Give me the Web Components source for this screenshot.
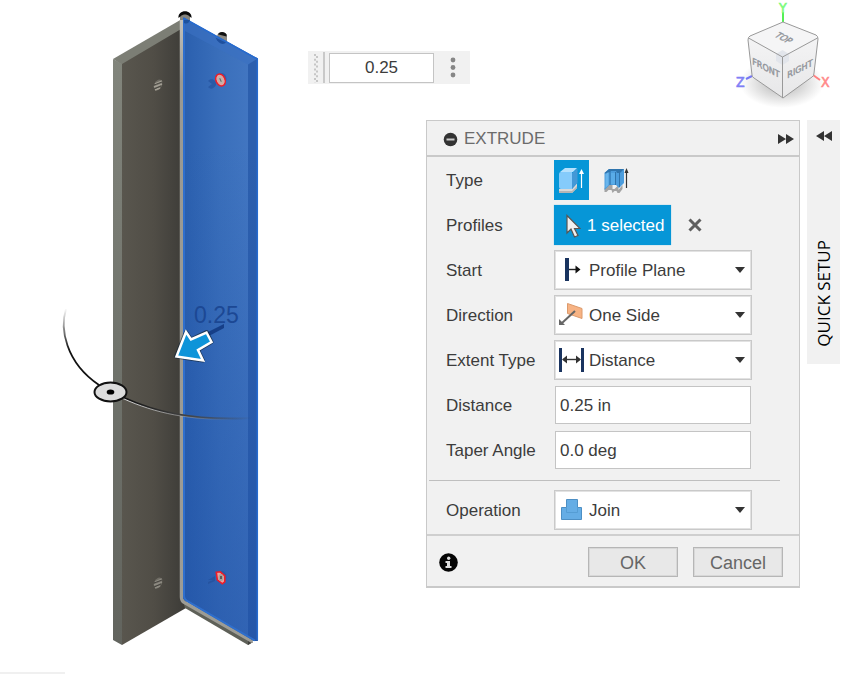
<!DOCTYPE html>
<html lang="en">
<head>
<meta charset="utf-8">
<title>Extrude</title>
<style>
body { margin: 0; background: #fff; color: #3c3c3c; font: 17px/20px "Liberation Sans", Arial, sans-serif; }
</style>
</head>
<body>
<cad-workspace>
  <model-view slot="model"></model-view>
  <value-toolbar slot="top" value="0.25"></value-toolbar>
  <view-cube slot="top"></view-cube>
  <command-panel slot="panels" heading="EXTRUDE">
    <type-picker></type-picker>
    <profile-picker></profile-picker>
    <select-field label="Start" options="Profile Plane|Offset Plane|Object">
      <svg slot="icon" width="30" height="32" viewBox="0 0 30 32"><path d="M8 4v23" stroke="#19335f" stroke-width="4"/><path d="M10 15.500h9" stroke="#222" stroke-width="1.4"/><path d="M16.500 11.500l5 4-5 4z" fill="#111"/></svg>
    </select-field>
    <select-field label="Direction" options="One Side|Two Sides|Symmetric">
      <svg slot="icon" width="30" height="32" viewBox="0 0 30 32"><path d="M8.500 4.500l14.500 5v10l-14.500-5z" fill="#f7b384" stroke="#dc9a6c"/><path d="M16 12L3 24" stroke="#666" stroke-width="2"/><path d="M0 20l6 6H0z" fill="#666"/></svg>
    </select-field>
    <select-field label="Extent Type" options="Distance|To Object|All">
      <svg slot="icon" width="30" height="32" viewBox="0 0 30 32"><path d="M1.500 4v24M23.500 4v24" stroke="#19335f" stroke-width="3"/><path d="M4 15.500h17" stroke="#333" stroke-width="1.400"/><path d="M3 15.500l5-4v8zM22 15.500l-5-4v8z" fill="#333"/></svg>
    </select-field>
    <text-field label="Distance" value="0.25 in"></text-field>
    <text-field label="Taper Angle" value="0.0 deg"></text-field>
    <panel-rule></panel-rule>
    <select-field label="Operation" options="Join|Cut|Intersect|New Body">
      <svg slot="icon" width="30" height="32" viewBox="0 0 30 32"><path d="M7.500 5.500h11v8h4v12h-20v-12h5z" fill="#65ade5" stroke="#4d8fc4"/><path d="M7.500 13.500v5h11v-5" fill="none" stroke="#559dd4"/></svg>
    </select-field>
  </command-panel>
  <side-tab slot="panels">QUICK SETUP</side-tab>
</cad-workspace>

<script>
const define = (name, html, setup) => customElements.define(name, class extends HTMLElement {
  constructor() {
    super();
    this.attachShadow({ mode: "open" }).innerHTML = html;
  }
  connectedCallback() { if (setup) setup(this, this.shadowRoot); }
});

define("cad-workspace", `
<style>
  :host { display: grid; grid-template-columns: auto 1fr; min-height: 100vh; }
  .side { display: flex; flex-direction: column; }
  .top { display: flex; justify-content: space-between; align-items: flex-start; height: 120px; }
  .panels { display: flex; justify-content: flex-end; align-items: flex-start; gap: 7px; padding-right: 4px; }
</style>
<slot name="model"></slot>
<div class="side">
  <div class="top"><slot name="top"></slot></div>
  <div class="panels"><slot name="panels"></slot></div>
</div>`);

define("model-view", `
<style>:host { display: block; width: 308px; } svg { display: block; }</style>
<svg width="308" height="674" viewBox="0 0 308 674" font-family="Liberation Sans, Arial, sans-serif">
  <defs>
    <linearGradient id="inner"><stop offset="0" stop-color="#59564e"/><stop offset=".5" stop-color="#504d46"/><stop offset="1" stop-color="#3c3b37"/></linearGradient>
    <linearGradient id="edge" x2="0" y2="1"><stop offset="0" stop-color="#82857c"/><stop offset=".5" stop-color="#70736c"/><stop offset="1" stop-color="#62645e"/></linearGradient>
    <linearGradient id="blue"><stop offset="0" stop-color="#2a5fae"/><stop offset=".5" stop-color="#3a6fbb"/><stop offset="1" stop-color="#4478c3"/></linearGradient>
    <linearGradient id="fall" x2="0" y2="1"><stop offset="0" stop-color="#1c4da4" stop-opacity="0"/><stop offset=".2" stop-color="#1c4da4" stop-opacity="0"/><stop offset="1" stop-color="#1c4da4" stop-opacity=".45"/></linearGradient>
    <linearGradient id="silver" x2="0" y2="1"><stop offset="0" stop-color="#c2c1bb"/><stop offset=".1" stop-color="#9a9992"/><stop offset="1" stop-color="#9d9c95"/></linearGradient>
    <linearGradient id="arcA" gradientUnits="userSpaceOnUse" x1="0" y1="308" x2="0" y2="350"><stop offset="0" stop-color="#111" stop-opacity="0"/><stop offset="1" stop-color="#111"/></linearGradient>
    <linearGradient id="arcB" gradientUnits="userSpaceOnUse" x1="123" y1="0" x2="252" y2="0"><stop offset="0" stop-color="#111"/><stop offset=".5" stop-color="#444"/><stop offset="1" stop-color="#444" stop-opacity="0"/></linearGradient>
    <linearGradient id="arcC" gradientUnits="userSpaceOnUse" x1="123" y1="0" x2="235" y2="0"><stop offset="0" stop-color="#ddd"/><stop offset="1" stop-color="#aaa" stop-opacity="0"/></linearGradient>
  </defs>
  <path d="M180 14h10v8h-10z" fill="#85837c"/><path d="M178.500 18c-1-9 14-9 13 0l-2.500-2c-2-2-6-2-8 0z" fill="#0a0a0a"/>
  <path d="M217 36c1-5 8-5 10-1v7l-10-5z" fill="#8b8983"/><path d="M218 34.500c1-3.500 7-3.500 8.500 0v2l-8-2z" fill="#111"/>
  <path d="M113 59l69-40v12l-60 34z" fill="#7c7e75"/>
  <path d="M113 59l9 5v581l-9-5z" fill="url(#edge)"/>
  <path d="M122 64l60-35.500 4 579.500-64 37z" fill="url(#inner)"/>
  <path d="M183 601l70 41-5 3-63-37z" fill="#5e6058"/>
  <path d="M248 645v-5l5 2z" fill="#42423e"/>
  <path d="M181.500 20v577q0 4 3 5.500l68 39" fill="none" stroke="url(#silver)" stroke-width="3.500"/>
  <path d="M183 17.500L258 58.500V641h-4L185.500 601q-2.500-1.500-2.500-4z" fill="url(#blue)"/>
  <path d="M183.500 17.500L258 58.500l-10 6-64-34z" fill="#3a70c1" fill-opacity=".65"/>
  <path d="M248 64.500l9-5.500V641h-3l-6-4z" fill="#2c5fae"/>
  <path d="M183 17.500L258 58.500V641h-4L185.500 601q-2.500-1.500-2.500-4z" fill="url(#fall)"/>
  <path d="M184 19v577q0 3 2.500 4.500L255 640.500" fill="none" stroke="#2f6fcd" stroke-width="2"/>
  <path d="M183.500 18L257.300 59v581" fill="none" stroke="#276bce" stroke-width="1.500"/>
  <path d="M215.500 37.500l10.500 5c-3 3-8 1-10.500-5z" fill="#1e509f"/>
  <path d="M184 20h6q-2 5-6 3z" fill="#1d529f"/>
  <g transform="translate(158 85)"><ellipse rx="3.800" ry="5.800" transform="rotate(25)" fill="#6f6c64"/><path d="M-3-1l7-3M-4 2L4-1M-3 5l5-2" stroke="#a39f94" stroke-width="1.500"/><path d="M-4-0l8-3M-4 4l7-3" stroke="#4a4842"/></g>
  <g transform="translate(158 583)"><ellipse rx="3.800" ry="5.800" transform="rotate(25)" fill="#6f6c64"/><path d="M-3-1l7-3M-4 2L4-1M-3 5l5-2" stroke="#8d8a81" stroke-width="1.500"/><path d="M-4-0l8-3M-4 4l7-3" stroke="#45433e"/></g>
  <path d="M208 81c3-4 9-1 8 4-3 5-6 4-8 2l4-3z" fill="#2a5aa6"/>
  <path d="M208 580l7-4v5l-7 3v-2l5-2z" fill="#2654a0"/>
  <ellipse cx="222" cy="79" rx="4.500" ry="6" fill="#2f5fab"/>
  <ellipse cx="222" cy="577" rx="4.500" ry="6" fill="#2b59a4"/>
  <g transform="translate(220.500 80) rotate(-24)"><ellipse rx="4.500" ry="6.200" fill="#c0b4ad" stroke="#f01b26" stroke-width="1.500"/><ellipse rx="3" ry="4.700" fill="none" stroke="#f29a98"/><path d="M0-2v4" stroke="#666"/></g>
  <path d="M216.300 572.300l4-.5 4.500 4v6l-2.500 2-5-4z" fill="#eaa3a0" stroke="#f01b26" stroke-width="1.600"/><ellipse cx="221" cy="577.500" rx="2.500" ry="3.500" fill="#aaa19d"/><path d="M221 576v3" stroke="#444" stroke-width="1.500"/>
  <text x="194" y="323" font-size="23" fill="#1c4894">0.25</text>
  <path d="M206 333l18-9v4l-17 9z" fill="#163f88"/>
  <path d="M66 309C60 328 65 362 99 385" fill="none" stroke="url(#arcA)" stroke-width="1.800"/>
  <path d="M123 397.500C155 412 190 421 252 418" fill="none" stroke="url(#arcB)" stroke-width="2"/>
  <path d="M123 398.500C155 413 190 421 240 419" fill="none" stroke="url(#arcC)"/>
  <ellipse cx="110.500" cy="392" rx="16" ry="9.500" fill="#dcdcdc" stroke="#111" stroke-width="2"/>
  <ellipse cx="110.500" cy="392" rx="3.800" ry="2.600" fill="#000"/>
  <path d="M176 356.500L186 332l5 7.500 15.500-7.500 5 10-13.500 8 5 10.500z" fill="#0d94d9" stroke="#172a3a" stroke-opacity=".7" stroke-width="4" stroke-linejoin="round"/>
  <path d="M176.500 356.500L186 332l5 7.500 15.500-7 5 9.500-13.500 8 5 10.500z" fill="#0d94d9" stroke="#fff" stroke-width="2.500"/>
  <path d="M0 672h65v2H0z" fill="#f0f0f0"/>
</svg>`);

define("value-toolbar", `
<style>
  :host { display: flex; align-items: center; box-sizing: border-box; width: 162px; height: 33px; margin-top: 51px; background: #f1f1f1; }
  svg { display: block; flex: none; }
  .bar { flex: none; width: 2px; height: 31px; margin: 0 4px 0 5px; background: #c9c9c9; }
  input { box-sizing: border-box; flex: 1; min-width: 0; height: 30px; padding: 0; border: 1px solid #c4c4c4; background: #fff; color: inherit; font: inherit; text-align: center; outline: 0; }
  button { display: grid; place-items: center; flex: none; width: 36px; height: 33px; padding: 0 0 0 2px; border: 0; background: none; }
</style>
<svg width="10" height="31" viewBox="0 0 10 31"><path d="M7 2v29" stroke="#c6c6c6" stroke-width="2" stroke-dasharray="2 2.800"/><path d="M9 4v27" stroke="#c6c6c6" stroke-width="2" stroke-dasharray="2 2.800"/></svg>
<span class="bar"></span>
<input aria-label="Distance">
<button aria-label="More options"><svg width="6" height="21" viewBox="0 0 6 21" fill="#868686"><circle cx="3" cy="3" r="2.400"/><circle cx="3" cy="10.500" r="2.400"/><circle cx="3" cy="18" r="2.400"/></svg></button>`,
(el, root) => { root.querySelector("input").value = el.getAttribute("value"); });

define("view-cube", `
<style>:host { display: block; margin-left: auto; } svg { display: block; }</style>
<svg width="124" height="112" viewBox="0 0 124 112" font-family="Liberation Sans, Arial, sans-serif">
  <defs><radialGradient id="sh"><stop offset="0" stop-color="#888" stop-opacity=".7"/><stop offset="1" stop-color="#999" stop-opacity="0"/></radialGradient>
  <linearGradient id="f" x2="0" y2="1"><stop offset="0" stop-color="#f7f7f8"/><stop offset="1" stop-color="#e7e7e8"/></linearGradient></defs>
  <ellipse cx="62" cy="83" rx="42" ry="25" fill="url(#sh)"/>
  <path d="M63 12v10" stroke="#55ef55" stroke-width="2"/>
  <path d="M32 76l-6 3" stroke="#7777f4" stroke-width="2"/><path d="M93 75l7 5" stroke="#ff8080" stroke-width="2"/>
  <g font-family="Liberation Sans Narrow, DejaVu Sans Condensed, sans-serif" font-size="14" stroke-width=".600">
    <text x="59" y="13" fill="#7dfa7d" stroke="#7dfa7d">Y</text>
    <text x="16" y="87" fill="#7f7ff5" stroke="#7f7ff5">Z</text>
    <text x="101" y="87" fill="#ff8a8a" stroke="#ff8a8a">X</text>
  </g>
  <path d="M63 22l33 13q2 1 2 4l-4 34q0 3-2 4L63 98 34 78q-2-1-2-3l-4-35q0-3 2-4z" fill="url(#f)"/>
  <path d="M63 22L97 37 62.500 57 28 37z" fill="#f5f5f6"/>
  <path d="M56 54l6.500-4 6.500 4v7l-6.500 4-6.500-4z" fill="#e2e5eb"/>
  <path d="M28.500 38l34 19L97.500 38M62.500 57v41" fill="none" stroke="#999" stroke-width="1"/>
  <path d="M63 22l33 13q2 1 2 4l-4 34q0 3-2 4L63 98 34 78q-2-1-2-3l-4-35q0-3 2-4z" fill="none" stroke="#999"/>
  <g fill="#92959b" stroke="#92959b" stroke-width=".400" text-anchor="middle" font-family="Liberation Sans Narrow, DejaVu Sans Condensed, sans-serif">
    <text transform="translate(46 71) skewY(27)" font-size="9">FRONT</text>
    <text transform="translate(80 72) skewY(-27)" font-size="9">RIGHT</text>
    <text transform="translate(61 40) rotate(28) skewX(-26)" font-size="9">TOP</text>
  </g>
</svg>`);

define("command-panel", `
<style>
  :host { display: block; box-sizing: border-box; width: 374px; border: 1px solid #c9c9c9; border-bottom-width: 2px; background: #f1f1f1; }
  header { display: flex; align-items: center; box-sizing: border-box; height: 36px; padding: 2px 5px 0 16px; border-bottom: 2px solid #c9c9c9; color: #6b6b6b; }
  h1 { flex: 1; margin: 0 0 0 6px; font: inherit; }
  button { font: inherit; color: inherit; }
  .bare { display: grid; padding: 0; border: 0; background: none; }
  svg { display: block; }
  .rows { display: grid; gap: 5px; padding: 3px 19px 4px 2px; }
  footer { display: flex; align-items: center; gap: 15px; box-sizing: border-box; height: 52px; padding: 2px 16px 0 12px; border-top: 2px solid #cfcfcf; }
  footer .bare { margin-right: auto; }
  .act { width: 90px; height: 30px; padding: 2px 0 0; border: 1px solid #b6b6b6; outline: 1px solid #d8d8d8; outline-offset: -2px; background: #e8e8e8; color: #666; font-size: 18px; line-height: 22px; }
</style>
<header>
  <button class="bare" aria-label="Collapse"><svg width="15" height="15" viewBox="0 0 15 15"><circle cx="7.500" cy="7.500" r="6.800" fill="#333"/><path d="M3.500 7.500h8" stroke="#ccc" stroke-width="2"/></svg></button>
  <h1></h1>
  <button class="bare" aria-label="Expand"><svg width="16" height="10" viewBox="0 0 16 10" fill="#333"><path d="M0 0l8 5-8 5zM8 0l8 5-8 5z"/></svg></button>
</header>
<div class="rows"><slot></slot></div>
<footer>
  <button class="bare" aria-label="Information"><svg width="19" height="19" viewBox="0 0 19 19"><circle cx="9.500" cy="9.500" r="9.300" fill="#050505"/><circle cx="9.700" cy="5.200" r="1.700" fill="#ddd"/><path d="M6.500 8h4.500v5h1.500v2h-6v-2H8v-3H6.500z" fill="#ddd"/></svg></button>
  <button class="act">OK</button>
  <button class="act">Cancel</button>
</footer>`,
(el, root) => { root.querySelector("h1").textContent = el.getAttribute("heading"); });

const rowStyle = `
  :host { display: grid; grid-template-columns: 108px 198px; align-items: center; height: 40px; padding-left: 17px; }
  label, .label { padding-top: 2px; color: #3c3c3c; }
  svg { display: block; }`;

define("type-picker", `
<style>${rowStyle}
  .set { display: flex; gap: 10px; }
  button { display: grid; place-items: center; width: 35px; height: 40px; padding: 0; border: 0; background: none; }
  button[aria-pressed=true] { background: #0696d7; }
</style>
<span class="label">Type</span>
<div class="set" role="group" aria-label="Type">
  <button aria-pressed="true" aria-label="Extrude"><svg width="27" height="28" viewBox="0 0 27 28">
    <path d="M1 23h13l5-6v5l-5 5H1z" fill="#d9d9d9"/><path d="M1 25h13l5-5v2l-5 5H1z" fill="#b5b5b5"/>
    <path d="M1 8q0-2 2-2h11v17H3q-2 0-2-2z" fill="#85cbfb"/><path d="M2 6l5-4h12l-4 4z" fill="#b6e1fd"/><path d="M14 7l5.500-4.500V17L14 23z" fill="#4398d6"/>
    <path d="M23.500 22V5" stroke="#fff" stroke-width="1.200"/><path d="M21 8l2.500-5L26 8z" fill="#fff"/></svg></button>
  <button aria-pressed="false" aria-label="Thin extrude"><svg width="27" height="28" viewBox="0 0 27 28">
    <path d="M1.500 22l5-4h3v5h2l3-3h1v4l4-5v4l-3 4h-2l-1-2h-2l-2 2-1-3h-3l-2 2h-2z" fill="#a4a4a4"/>
    <path d="M1.500 7L6 3h15v14l-5 5-3-3H6.500l-5 5z" fill="#4c9ddd"/>
    <path d="M1.500 7L6 3h15l-4 4h-3l-1-2H8L4 8z" fill="#2f74ad"/>
    <path d="M7 5v14M12.500 6v13M16.500 7v14" stroke="#2f74ad"/><path d="M2.500 8l3-2v13l-3 3z" fill="#69b5ec"/><path d="M8 7h4v11H8z" fill="#5aace8"/>
    <path d="M23.500 22V5" stroke="#333" stroke-width="1.200"/><path d="M21.500 7l2-5 2 5z" fill="#333"/></svg></button>
</div>`);

define("profile-picker", `
<style>${rowStyle}
  .set { display: flex; align-items: center; gap: 17px; }
  button { padding: 0; border: 0; background: none; font: inherit; }
  .sel { display: flex; align-items: center; gap: 6px; box-sizing: border-box; width: 117px; height: 40px; padding: 2px 0 0 12px; background: #0696d7; color: #fff; box-shadow: 0 0 1px #70c3e8; white-space: nowrap; }
</style>
<span class="label">Profiles</span>
<div class="set">
  <button class="sel"><svg width="15" height="24" viewBox="0 0 15 24"><path d="M1 1.500v17.500l4-4 3.500 8 3.500-1.500-3.500-7H14z" fill="#f0f0f0" stroke="#5a5552" stroke-width="1.200"/></svg>1 selected</button>
  <button aria-label="Clear selection"><svg width="14" height="14" viewBox="0 0 14 14"><path d="M1.500 1.500l11 11M12.500 1.500l-11 11" stroke="#5f5f5f" stroke-width="3"/></svg></button>
</div>`);

define("select-field", `
<style>${rowStyle}
  .box { display: grid; grid-template-columns: 5px 30px 1fr 17px; align-items: center; }
  select { grid-area: 1 / 1 / 2 / 5; box-sizing: border-box; width: 100%; height: 40px; margin: 0; padding: 2px 20px 0 34px; border: 1px solid #c9c9c9; border-radius: 0; outline: 1px solid #e2e2e2; outline-offset: -2px; appearance: none; background: #fff; color: inherit; font: inherit; }
  slot { display: grid; grid-area: 1 / 2; pointer-events: none; }
  .caret { grid-area: 1 / 4; pointer-events: none; }
</style>
<label for="s"></label>
<div class="box"><select id="s"></select><slot name="icon"></slot>
  <svg class="caret" width="10" height="6" viewBox="0 0 10 6"><path d="M0 0h10L5 6z" fill="#333"/></svg></div>`,
(el, root) => {
  root.querySelector("label").textContent = el.getAttribute("label");
  root.querySelector("select").replaceChildren(...el.getAttribute("options").split("|").map(t => new Option(t)));
});

define("text-field", `
<style>${rowStyle}
  input { box-sizing: border-box; height: 38px; margin: 0 1px; padding: 2px 4px 0; border: 1px solid #c4c4c4; background: #fff; color: inherit; font: inherit; min-width: 0; }
</style>
<label for="t"></label><input id="t">`,
(el, root) => {
  root.querySelector("label").textContent = el.getAttribute("label");
  root.querySelector("input").value = el.getAttribute("value");
});

define("panel-rule", `<style>:host { display: block; height: 1px; margin: 5px 0 4px; background: #bfbfbf; }</style>`);

define("side-tab", `
<style>
  :host { display: flex; flex-direction: column; align-items: center; justify-content: space-between; box-sizing: border-box; width: 33px; height: 244px; padding: 11px 0 17px; background: #f1f1f1; color: #000; }
  button { display: grid; padding: 0; border: 0; background: none; }
  .name { writing-mode: vertical-rl; rotate: 180deg; font: 17px/24px "Open Sans", sans-serif; white-space: nowrap; }
</style>
<button aria-label="Open quick setup"><svg width="16" height="10" viewBox="0 0 16 10" fill="#333"><path d="M16 0L8 5l8 5zM8 0L0 5l8 5z"/></svg></button>
<span class="name"><slot></slot></span>`);
</script>
</body>
</html>
